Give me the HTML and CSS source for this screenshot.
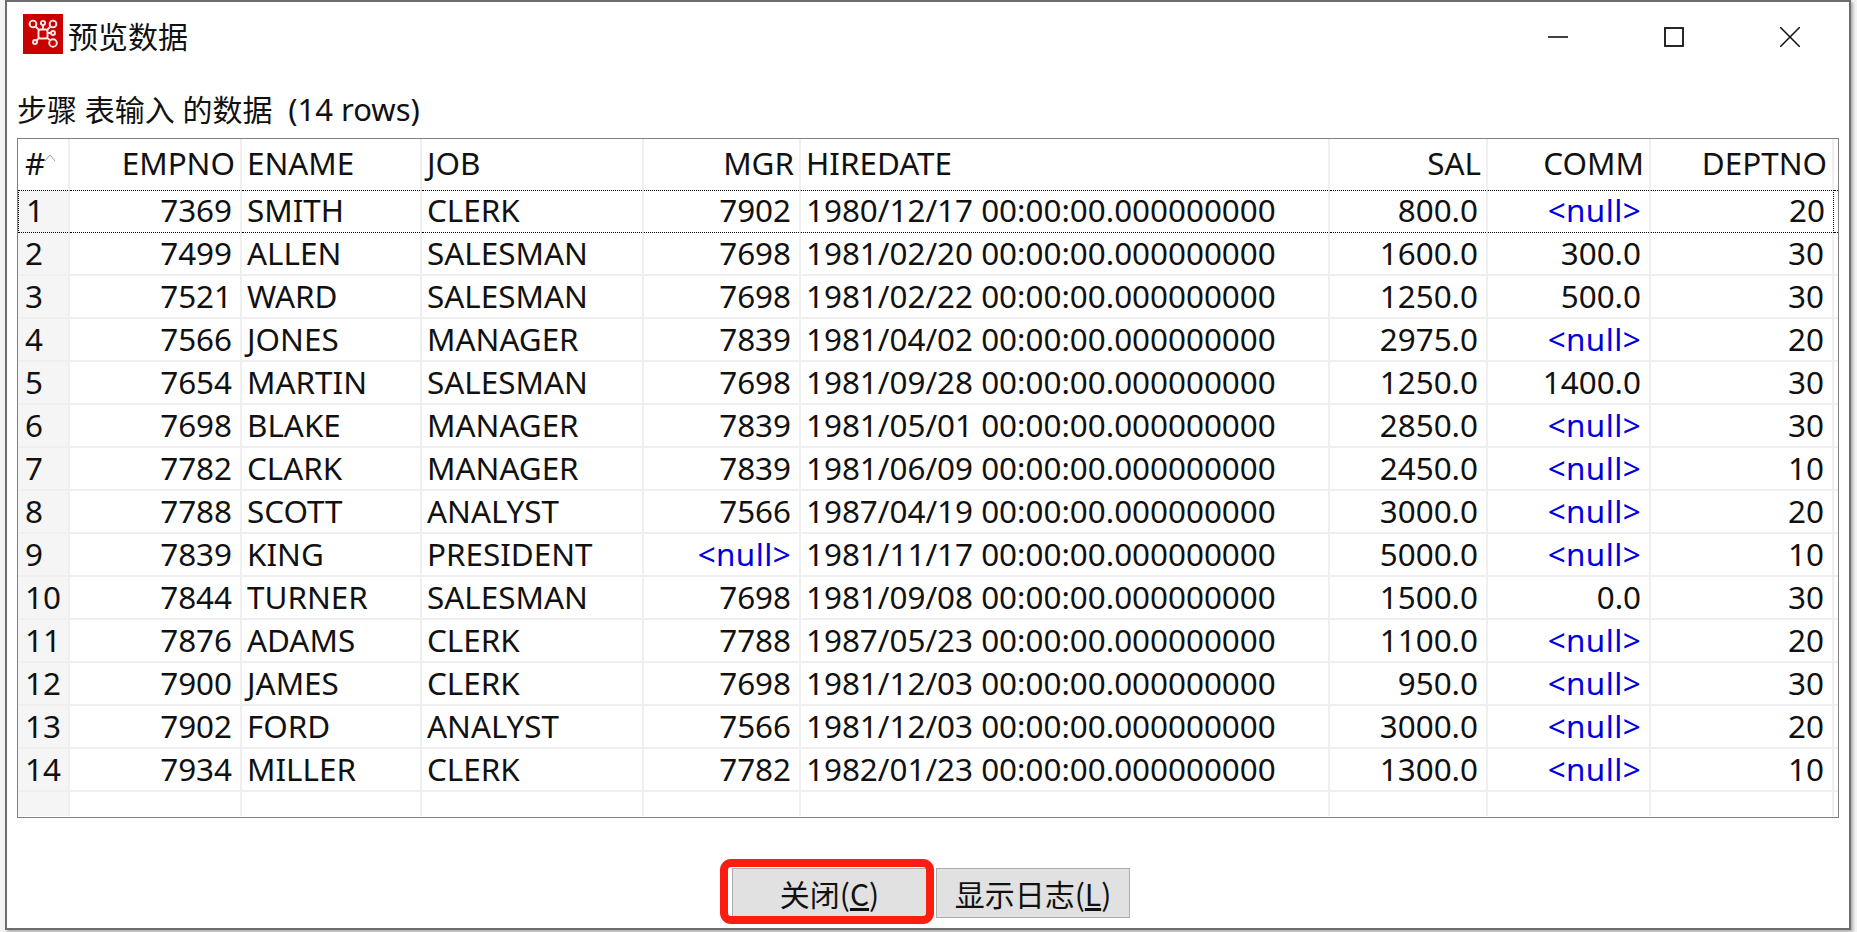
FILE: index.html
```html
<!DOCTYPE html>
<html lang="zh-CN">
<head>
    <meta charset="UTF-8">
    <title>预览数据</title>
    <link rel="stylesheet" href="styles.css">
</head>
<body>
    <div class="ventana">
        <!-- Barra de titulo -->
        <div class="titulo">
            <svg class="logo" viewBox="0 0 40 40">
                <rect width="40" height="40" fill="#c80000"/>
                <g fill="none" stroke="#ffeaea" stroke-width="1.9">
                    <path d="M12.5 12.5L16 16M20 11V15.5M27.5 12.5L24 16M28 19H24.5M27 26L24 24M13.5 26.5L16 24"/>
                    <rect x="15.5" y="15.5" width="9" height="9" rx="2"/>
                    <circle cx="10" cy="10" r="3.4"/>
                    <circle cx="20" cy="9" r="2.1"/>
                    <circle cx="30" cy="10" r="3.4"/>
                    <circle cx="30" cy="19" r="2"/>
                    <circle cx="30" cy="29" r="3.8"/>
                    <circle cx="12" cy="28" r="2"/>
                </g>
            </svg>
            <span class="titulo-texto">预览数据</span>
            <div class="controles">
                <svg class="ctrl" viewBox="0 0 20 20"><path d="M0 10H20" stroke="#111" stroke-width="1.6"/></svg>
                <svg class="ctrl" viewBox="0 0 20 20"><rect x="1" y="1" width="18" height="18" fill="none" stroke="#111" stroke-width="1.8"/></svg>
                <svg class="ctrl" viewBox="0 0 20 20"><path d="M0 0L20 20M20 0L0 20" stroke="#111" stroke-width="1.5"/></svg>
            </div>
        </div>

        <p class="subtitulo">步骤 表输入 的数据&nbsp; <span class="filas">(14 rows)</span></p>

        <!-- Tabla de datos -->
        <div class="tabla-caja">
            <table class="tabla">
                <colgroup>
                    <col class="c-num"><col class="c-empno"><col class="c-ename"><col class="c-job"><col class="c-mgr"><col class="c-fecha"><col class="c-sal"><col class="c-comm"><col class="c-dept"><col>
                </colgroup>
                <thead>
                    <tr>
                        <th class="num">#<svg class="orden" viewBox="0 0 10 7"><path d="M0 7L5 1L10 7" fill="none" stroke="#999" stroke-width="1"/></svg></th>
                        <th class="der">EMPNO</th><th>ENAME</th><th>JOB</th><th class="der">MGR</th><th>HIREDATE</th><th class="der">SAL</th><th class="der">COMM</th><th class="der">DEPTNO</th><th></th>
                    </tr>
                </thead>
                <tbody>
                    <tr class="foco"><td class="num">1</td><td class="der">7369</td><td>SMITH</td><td>CLERK</td><td class="der">7902</td><td>1980/12/17 00:00:00.000000000</td><td class="der">800.0</td><td class="der nulo">&lt;null&gt;</td><td class="der">20</td><td></td></tr>
                    <tr><td class="num">2</td><td class="der">7499</td><td>ALLEN</td><td>SALESMAN</td><td class="der">7698</td><td>1981/02/20 00:00:00.000000000</td><td class="der">1600.0</td><td class="der">300.0</td><td class="der">30</td><td></td></tr>
                    <tr><td class="num">3</td><td class="der">7521</td><td>WARD</td><td>SALESMAN</td><td class="der">7698</td><td>1981/02/22 00:00:00.000000000</td><td class="der">1250.0</td><td class="der">500.0</td><td class="der">30</td><td></td></tr>
                    <tr><td class="num">4</td><td class="der">7566</td><td>JONES</td><td>MANAGER</td><td class="der">7839</td><td>1981/04/02 00:00:00.000000000</td><td class="der">2975.0</td><td class="der nulo">&lt;null&gt;</td><td class="der">20</td><td></td></tr>
                    <tr><td class="num">5</td><td class="der">7654</td><td>MARTIN</td><td>SALESMAN</td><td class="der">7698</td><td>1981/09/28 00:00:00.000000000</td><td class="der">1250.0</td><td class="der">1400.0</td><td class="der">30</td><td></td></tr>
                    <tr><td class="num">6</td><td class="der">7698</td><td>BLAKE</td><td>MANAGER</td><td class="der">7839</td><td>1981/05/01 00:00:00.000000000</td><td class="der">2850.0</td><td class="der nulo">&lt;null&gt;</td><td class="der">30</td><td></td></tr>
                    <tr><td class="num">7</td><td class="der">7782</td><td>CLARK</td><td>MANAGER</td><td class="der">7839</td><td>1981/06/09 00:00:00.000000000</td><td class="der">2450.0</td><td class="der nulo">&lt;null&gt;</td><td class="der">10</td><td></td></tr>
                    <tr><td class="num">8</td><td class="der">7788</td><td>SCOTT</td><td>ANALYST</td><td class="der">7566</td><td>1987/04/19 00:00:00.000000000</td><td class="der">3000.0</td><td class="der nulo">&lt;null&gt;</td><td class="der">20</td><td></td></tr>
                    <tr><td class="num">9</td><td class="der">7839</td><td>KING</td><td>PRESIDENT</td><td class="der nulo">&lt;null&gt;</td><td>1981/11/17 00:00:00.000000000</td><td class="der">5000.0</td><td class="der nulo">&lt;null&gt;</td><td class="der">10</td><td></td></tr>
                    <tr><td class="num">10</td><td class="der">7844</td><td>TURNER</td><td>SALESMAN</td><td class="der">7698</td><td>1981/09/08 00:00:00.000000000</td><td class="der">1500.0</td><td class="der">0.0</td><td class="der">30</td><td></td></tr>
                    <tr><td class="num">11</td><td class="der">7876</td><td>ADAMS</td><td>CLERK</td><td class="der">7788</td><td>1987/05/23 00:00:00.000000000</td><td class="der">1100.0</td><td class="der nulo">&lt;null&gt;</td><td class="der">20</td><td></td></tr>
                    <tr><td class="num">12</td><td class="der">7900</td><td>JAMES</td><td>CLERK</td><td class="der">7698</td><td>1981/12/03 00:00:00.000000000</td><td class="der">950.0</td><td class="der nulo">&lt;null&gt;</td><td class="der">30</td><td></td></tr>
                    <tr><td class="num">13</td><td class="der">7902</td><td>FORD</td><td>ANALYST</td><td class="der">7566</td><td>1981/12/03 00:00:00.000000000</td><td class="der">3000.0</td><td class="der nulo">&lt;null&gt;</td><td class="der">20</td><td></td></tr>
                    <tr><td class="num">14</td><td class="der">7934</td><td>MILLER</td><td>CLERK</td><td class="der">7782</td><td>1982/01/23 00:00:00.000000000</td><td class="der">1300.0</td><td class="der nulo">&lt;null&gt;</td><td class="der">10</td><td></td></tr>
                    <tr class="vacia"><td class="num"></td><td></td><td></td><td></td><td></td><td></td><td></td><td></td><td></td><td></td></tr>
                </tbody>
            </table>
        </div>

        <!-- Botones -->
        <div class="botones">
            <button class="boton marcado">关闭(<u>C</u>)</button>
            <button class="boton">显示日志(<u>L</u>)</button>
        </div>
    </div>
</body>
</html>
```

FILE: styles.css
```css
html, body {
    margin: 0;
    height: 100%;
    background: #f4f4f4;
    overflow: hidden;
}
body {
    font-family: "Noto Sans", "Noto Sans CJK SC", sans-serif;
    color: #111;
}
.ventana {
    box-sizing: border-box;
    display: flex;
    flex-direction: column;
    width: 1846px;
    height: 930px;
    margin-left: 5px;
    background: #fff;
    border: 2px solid #6d6d6d;
    box-shadow: 2px 2px 3px #aaa;
}
.titulo {
    display: flex;
    align-items: center;
    height: 68px;
    padding-left: 16px;
}
.logo {
    width: 40px;
    height: 40px;
    margin-top: -4px;
}
.titulo-texto {
    margin-left: 5px;
    font-family: "Noto Sans CJK SC", sans-serif;
    font-size: 30px;
    line-height: 40px;
    margin-top: -3px;
}
.controles {
    display: flex;
    gap: 96px;
    margin-left: auto;
    margin-right: 49px;
    margin-top: 1px;
}
.ctrl {
    width: 20px;
    height: 20px;
}
.subtitulo {
    margin: 0;
    height: 68px;
    padding-left: 10px;
    font-size: 30px;
    line-height: 78px;
}
.filas {
    font-size: 31px;
}
.tabla-caja {
    box-sizing: border-box;
    width: 1822px;
    height: 680px;
    margin-left: 10px;
    border: 1px solid #808080;
}
.tabla {
    table-layout: fixed;
    width: 1820px;
    border-collapse: separate;
    border-spacing: 0;
    font-size: 31.4px;
}
.c-num { width: 52px; }
.c-empno { width: 172px; }
.c-ename { width: 180px; }
.c-job { width: 222px; }
.c-mgr { width: 157px; }
.c-fecha { width: 529px; }
.c-sal { width: 158px; }
.c-comm { width: 163px; }
.c-dept { width: 183px; }
th, td {
    box-sizing: border-box;
    padding: 0 8px 2px 5px;
    height: 43px;
    line-height: 39px;
    white-space: nowrap;
    text-align: left;
    font-weight: normal;
    border-right: 2px solid #efefef;
    border-bottom: 2px solid #efefef;
}
th {
    height: 51px;
    line-height: 48px;
    padding: 0 5px 3px 5px;
    border-bottom: none;
}
th:last-child, td:last-child {
    border-right: none;
}
.der {
    text-align: right;
}
.num {
    padding-left: 7px;
    background: #f5f5f5;
}
th.num {
    padding-left: 7px;
    background: #fff;
}
.orden {
    width: 10px;
    height: 7px;
    margin-bottom: 14px;
}
.nulo {
    color: #0000dc;
    letter-spacing: 0.4px;
}
.foco td {
    border-top: 1px dotted #000;
    border-bottom: 1px dotted #000;
    padding-bottom: 3px;
    line-height: 38px;
}
.foco td:first-child {
    border-left: 1px dotted #000;
}
.foco td:nth-child(9) {
    border-right: 1px dotted #000;
}
.vacia td {
    height: 24px;
    line-height: 24px;
    padding-bottom: 0;
    border-bottom: none;
}
.botones {
    display: flex;
    gap: 9px;
    margin-top: 50px;
    padding-left: 725px;
}
.boton {
    height: 50px;
    padding: 0;
    background: #e1e1e1;
    border: 1px solid #adadad;
    font-family: "Noto Sans CJK SC", "Noto Sans", sans-serif;
    font-size: 30px;
    color: #111;
    width: 194px;
}
/* marco rojo encima del boton */
.marcado {
    position: relative;
    width: 195px;
}
.marcado::after {
    content: "";
    position: absolute;
    top: -10px;
    left: -13px;
    width: 198px;
    height: 49px;
    border: 8px solid #fb1e10;
    border-radius: 11px;
}
```
